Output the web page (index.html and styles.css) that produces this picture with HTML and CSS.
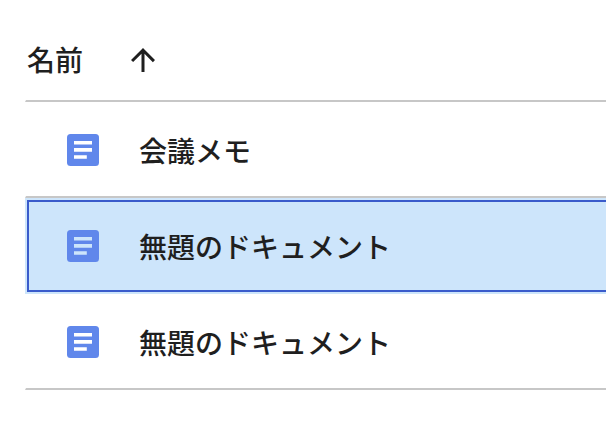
FILE: index.html
```html
<!DOCTYPE html>
<html lang="ja">
<head>
<meta charset="utf-8">
<title>ドキュメント</title>
<link rel="stylesheet" href="styles.css">
</head>
<body>
<main class="list">
  <header class="head"><span>名前</span>
    <svg class="arrow" viewBox="0 0 24 24"><path d="M4 12l1.41 1.41L11 7.83V20h2V7.83l5.58 5.59L20 12l-8-8-8 8z"/></svg>
  </header>
  <div class="row"><svg class="icon" viewBox="0 0 32 32"><rect width="32" height="32" rx="3.5"/><path d="M7 7h18v3.6H7zM7 14.1h18v3.6H7zM7 21.2h12.8v3.6H7z"/></svg><span>会議メモ</span></div>
  <div class="row selected"><svg class="icon" viewBox="0 0 32 32"><rect width="32" height="32" rx="3.5"/><path d="M7 7h18v3.6H7zM7 14.1h18v3.6H7zM7 21.2h12.8v3.6H7z"/></svg><span>無題のドキュメント</span></div>
  <div class="row"><svg class="icon" viewBox="0 0 32 32"><rect width="32" height="32" rx="3.5"/><path d="M7 7h18v3.6H7zM7 14.1h18v3.6H7zM7 21.2h12.8v3.6H7z"/></svg><span>無題のドキュメント</span></div>
</main>
</body>
</html>
```
FILE: styles.css
```css
* { box-sizing: border-box; }
body { margin: 0; background: #fff; color: #1f1f1f; font: 500 28px/40px "Noto Sans CJK JP", sans-serif; overflow: hidden; }
.list { margin-left: 25px; padding-top: 20px; }
.head { height: 82px; display: flex; align-items: center; gap: 42px; padding-left: 1px; border-bottom: 2px solid #c7c7c7; border-left: 1px solid transparent; }
.head span { padding-bottom: 2px; }
.arrow { display: block; width: 36px; height: 36px; fill: #1f1f1f; }
.row { height: 96px; display: flex; align-items: center; gap: 40px; padding: 2px 0 0 41px; border-bottom: 2px solid #c7c7c7; border-left: 1px solid transparent; }
.icon { width: 32px; height: 32px; flex: none; }
.icon rect { fill: #6087eb; }
.icon path { fill: #fff; }
.selected { background: #cde5fb; border: 2px solid #cde5fb; border-right: 0; box-shadow: inset 2px 2px #3a5bcb, inset 0 -2px #3a5bcb; padding: 0 0 0 40px; }
.selected .icon path { fill: #cde5fb; }
```
